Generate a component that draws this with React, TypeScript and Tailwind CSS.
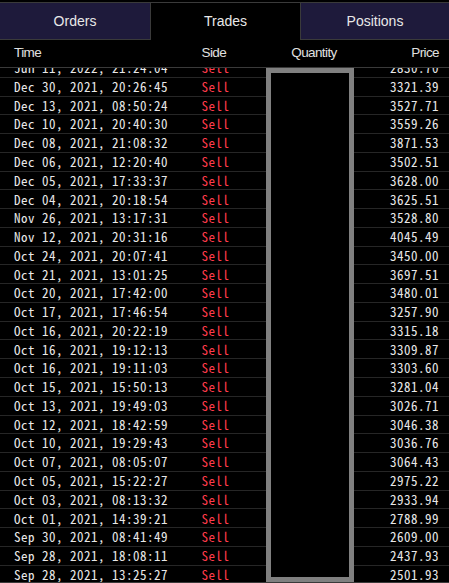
import React from "react";

const rows: [string, string][] = [
  ["Jun 11, 2022, 21:24:04", "2830.70"],
  ["Dec 30, 2021, 20:26:45", "3321.39"],
  ["Dec 13, 2021, 08:50:24", "3527.71"],
  ["Dec 10, 2021, 20:40:30", "3559.26"],
  ["Dec 08, 2021, 21:08:32", "3871.53"],
  ["Dec 06, 2021, 12:20:40", "3502.51"],
  ["Dec 05, 2021, 17:33:37", "3628.00"],
  ["Dec 04, 2021, 20:18:54", "3625.51"],
  ["Nov 26, 2021, 13:17:31", "3528.80"],
  ["Nov 12, 2021, 20:31:16", "4045.49"],
  ["Oct 24, 2021, 20:07:41", "3450.00"],
  ["Oct 21, 2021, 13:01:25", "3697.51"],
  ["Oct 20, 2021, 17:42:00", "3480.01"],
  ["Oct 17, 2021, 17:46:54", "3257.90"],
  ["Oct 16, 2021, 20:22:19", "3315.18"],
  ["Oct 16, 2021, 19:12:13", "3309.87"],
  ["Oct 16, 2021, 19:11:03", "3303.60"],
  ["Oct 15, 2021, 15:50:13", "3281.04"],
  ["Oct 13, 2021, 19:49:03", "3026.71"],
  ["Oct 12, 2021, 18:42:59", "3046.38"],
  ["Oct 10, 2021, 19:29:43", "3036.76"],
  ["Oct 07, 2021, 08:05:07", "3064.43"],
  ["Oct 05, 2021, 15:22:27", "2975.22"],
  ["Oct 03, 2021, 08:13:32", "2933.94"],
  ["Oct 01, 2021, 14:39:21", "2788.99"],
  ["Sep 30, 2021, 08:41:49", "2609.00"],
  ["Sep 28, 2021, 18:08:11", "2437.93"],
  ["Sep 28, 2021, 13:25:27", "2501.93"],
];

const mono = "font-['Noto_Sans_Mono_CJK_JP',monospace] text-[13px] tracking-[0.5px]";

export default function App() {
  return (
    <div className="w-[449px] h-[583px] bg-black pt-[2px] flex flex-col overflow-hidden">
      <div className="border-t border-[#3a3a3a] flex h-[38px] font-['Liberation_Sans',Arial,sans-serif] text-[14px] text-[#e8e8e8]">
        <div className="w-[151px] bg-[#1e1a3b] border-r border-b border-[#3a3a3a] flex items-center justify-center">
          Orders
        </div>
        <div className="w-[149px] bg-black flex items-center justify-center">Trades</div>
        <div className="flex-1 bg-[#1e1a3b] border-l border-b border-[#3a3a3a] flex items-center justify-center">
          Positions
        </div>
      </div>
      <div className="flex items-center h-[28px] border-b border-[#3a3a3a] pl-[14px] pr-[10px] font-['Liberation_Sans',Arial,sans-serif] text-[13.5px] tracking-[-0.6px] text-[#e0e0e0]">
        <div className="w-[187.5px]">Time</div>
        <div className="w-[64.5px]">Side</div>
        <div className="w-[96px] text-center">Quantity</div>
        <div className="flex-1 text-right">Price</div>
      </div>
      <div className="relative flex-1 overflow-hidden border-b border-[#3a3a3a]">
        <div className="mt-[-9px]">
          {rows.map(([t, p], i) => (
            <div
              key={i}
              className={`flex items-center h-[18.78px] border-b border-[#262626] pl-[14px] pr-[10px] text-[#e8e8e8] ${mono}`}
            >
              <div className="w-[187.5px] whitespace-nowrap">{t}</div>
              <div className="w-[64.5px] text-[#ff3b4b]">Sell</div>
              <div className="w-[96px]"></div>
              <div className="flex-1 text-right">{p}</div>
            </div>
          ))}
        </div>
        <div className="absolute left-[266px] top-0 w-[88px] bottom-[0px] bg-black border-[5px] border-[#808080]" />
      </div>
    </div>
  );
}
